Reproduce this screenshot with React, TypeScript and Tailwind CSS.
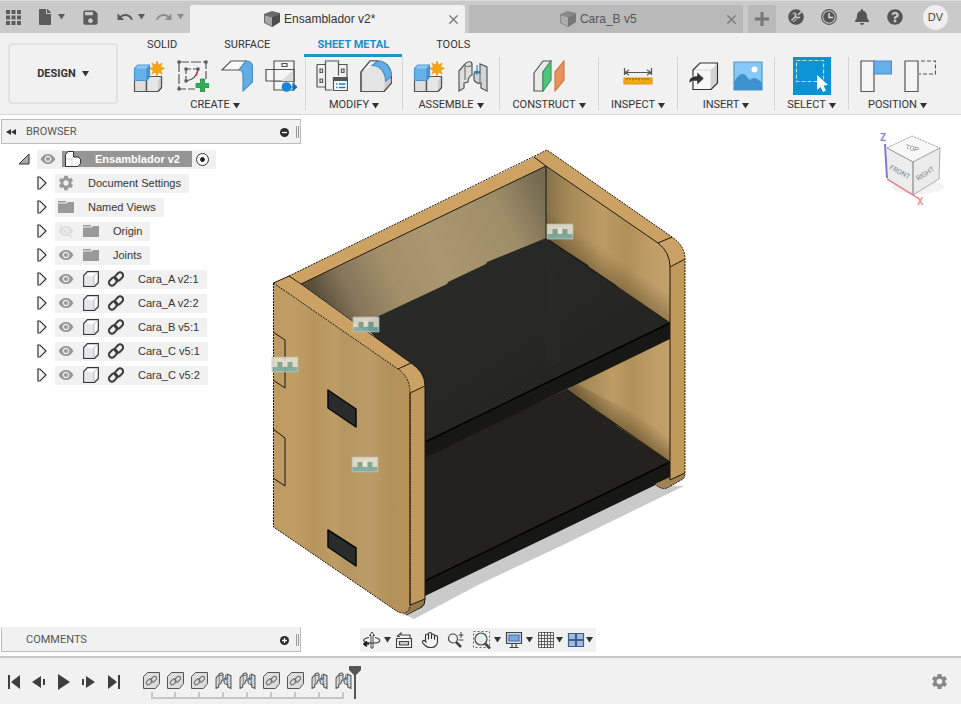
import type { ReactNode } from "react";
import { clsx } from "clsx";
import { FaBell, FaFile, FaQuestionCircle } from "react-icons/fa";
import { MdRedo, MdSave, MdSettings, MdUndo, MdVisibility, MdVisibilityOff } from "react-icons/md";
import { Hand, X } from "lucide-react";

function Caret({ className = "" }: { className?: string }) {
  return (
    <svg width="7" height="6" viewBox="0 0 7 6" className={clsx("shrink-0", className)}>
      <path d="M0 0h7L3.5 5.500z" fill="currentColor" />
    </svg>
  );
}

/* ---------- ribbon icons, all on a 32px grid ---------- */

function Icon({ children, size = 32 }: { children: ReactNode; size?: number }) {
  return (
    <svg width={size} height={size} viewBox="0 0 32 32" fill="none" stroke="#555" strokeWidth="1.2">
      {children}
    </svg>
  );
}

function NewComponentIcon() {
  return (
    <Icon>
      <path d="M1.5 20.5h12v11h-12z" fill="#dedede" />
      <path d="M13.5 20.5l3-4h12v11l-3.500 4h-11.500z" fill="#e6e6e6" />
      <path d="M25 20.500l3.500-4v11l-3.500 4z" fill="#cfcfcf" stroke="none" />
      <path d="M13.5 20.5l3-4h12v11l-3.500 4h-11.500z" />
      <path d="M1.500 8.500l3.500-3.500h11.500v12l-3 3.500h-12z" fill="#64b1ea" stroke="#4b96cf" />
      <path d="M2 8.500L5.300 5.500h10.500l-2.500 3z" fill="#8cc8f2" stroke="none" />
      <path d="M13.500 8.500l3-3.500v12l-3 3.500z" fill="#4590cb" stroke="none" />
      <path
        d="M24 1l1.500 4 3.800-2-1.800 3.800 4 1.700-4 1.700 1.800 3.800-3.800-1.800L24 16l-1.500-3.800-3.800 1.800 1.800-3.800-4-1.700 4-1.700-1.800-3.800 3.800 2z"
        fill="#f5a30f"
        stroke="#e0951a"
        strokeWidth="0.600"
      />
    </Icon>
  );
}

function SketchIcon() {
  return (
    <Icon>
      <path d="M2 2h27v17M2 2v27h16" strokeDasharray="10 2" />
      <path d="M9 9h12M9 9v12" strokeDasharray="5 2" />
      <path d="M9 21c7-1 11-5 12-12" />
      <path d="M21 9c0 3-1 5-2 7" stroke="#c33" />
      <path
        d="M.500.500h3v3h-3zM27.500.500h3v3h-3zM.500 27.500h3v3h-3zM7.500 7.500h3v3h-3zM19.500 7.500h3v3h-3zM7.500 19.500h3v3h-3z"
        fill="#555"
        stroke="none"
      />
      <path d="M23.500 19h4v4.500H32v4h-4.500V32h-4v-4.500H19v-4h4.500z" fill="#2fae54" stroke="#1f8f40" strokeWidth="0.800" />
    </Icon>
  );
}

function FlangeIcon() {
  return (
    <Icon>
      <path d="M1 10L10 1h15l-7 9z" fill="#fafafa" />
      <path d="M18 10l7-9c4 0 6.500 2 6.500 6v15L22 31V16c0-3.500-1-6-4-6z" fill="#62ade6" stroke="#4a90c8" />
    </Icon>
  );
}

function UnfoldIcon() {
  return (
    <Icon>
      <path d="M9 1h20v8.500H9zM9 21h20v9H9z" fill="#f5f5f5" />
      <path d="M1 9.500h28V21H1z" fill="#f5f5f5" />
      <path d="M28.500 10V21H16z" fill="#ddd" stroke="none" />
      <path d="M9 9.500V21M29 9.500V21M17 3.500h5v3h-5z" />
      <circle cx="21.500" cy="27" r="4.800" fill="#1686d9" stroke="none" />
      <path d="M25 27h3v-3l4 3-4 3v-3" fill="#1470b4" stroke="#1470b4" />
    </Icon>
  );
}

function RulesIcon() {
  return (
    <Icon>
      <path d="M1 4.500h8.500V1h13v3.500H31V18M1 4.500V27h8.500v3H16M9.500 4.500V27M22.500 4.500v11" />
      <path d="M4 9h2.500v3.500H4zM4 19h2.500v3.500H4zM25.500 9H28v3.500h-2.500z" />
      <path d="M17.500 17.500h14v13h-14z" fill="#fff" />
      <path d="M17.500 17.500h14v3h-14z" fill="#555" />
      <path d="M20 24h1.500M20 27.500h1.500M23 24h6.500M23 27.500h6.500" stroke="#1879c4" strokeWidth="1.500" />
    </Icon>
  );
}

function FilletIcon() {
  return (
    <Icon>
      <path d="M1 12L10 1h8c8 0 13.500 7 13.500 15v7L24 31.500H1z" fill="#e4e4e4" />
      <path d="M1 12L10 1h7l-5 4.500C9 8 5 10 1 12z" fill="#f6f6f6" stroke="none" />
      <path d="M25 20.500l6-4V23l-7 8z" fill="#cdcdcd" stroke="none" />
      <path d="M12 5.500L17.500 1C26 1 31.500 8 31.500 16.500L25.500 21C25.500 12 20 5.500 12 5.500z" fill="#62ade6" stroke="#4a90c8" />
      <path d="M1 12L10 1h8M31.500 16v7L24 31.500H1V12" />
    </Icon>
  );
}

function JointIcon({ size }: { size?: number }) {
  return (
    <Icon size={size}>
      <g strokeWidth={size ? 2 : 1.2}>
        <path d="M2 11l6-7c2-3 7-3 7 0v11c-3 1-4 4-4 7l-4 1v5l-5 3z" fill="#dedede" />
        <path d="M8 5v15M8 5c1 2 5 2 7 0" stroke="#777" />
        <path d="M30 7v24l-6-3v-5c-3 1-6-1-7-3v-6c1-3 4-3 6-1V4z" fill="#d0d5d9" />
        <path d="M23 13v10" stroke="#777" />
        <path d="M20 5v9M17.500 11l2.500 3 2.500-3" stroke="#2f83bd" />
      </g>
    </Icon>
  );
}

function PlaneIcon() {
  return (
    <Icon>
      <path d="M1 13L10 1h8l-8 11v19H1z" fill="#e9e9e9" />
      <path d="M10 12l8-11v19l-8 11z" fill="#4fc67a" stroke="#3b9c5d" />
      <path d="M22 12l9-11v19l-9 11z" fill="#e8925c" stroke="#cf7b48" />
    </Icon>
  );
}

function MeasureIcon() {
  return (
    <Icon>
      <path d="M2.500 8v7M29.500 8v7M4 12.500h24M7 10l-4 2.500L7 15M25 10l4 2.500-4 2.500" />
      <path d="M2 18h28v6H2z" fill="#f5a90f" stroke="#e09514" />
      <path d="M5 18v2.500M8 18v2M11 18v2.500M14 18v2M17 18v2.500M20 18v2M23 18v2.500M26 18v2" stroke="#8a5a00" strokeWidth="1" />
    </Icon>
  );
}

function InsertIcon() {
  return (
    <Icon>
      <path d="M5 10l7-7h17.500v20L23 29.500H5z" fill="#f7f7f7" stroke="none" />
      <path d="M23 10l6.500-7v20L23 29.500z" fill="#d2d2d2" stroke="none" />
      <path d="M5 10h18v19" stroke="#d5d5d5" />
      <path d="M5 10l7-7h17.500v20L23 29.500H5z" stroke="#333" />
      <path d="M1 23c0-5 3-7 8-7v-4l7 6.500L9 25v-4c-3 0-5 0-8 2z" fill="#333" stroke="#fff" strokeWidth="0.500" />
    </Icon>
  );
}

function ImageIcon() {
  return (
    <Icon>
      <path d="M2 2h28v28H2z" fill="#86c8f6" stroke="#4b9bd2" />
      <path d="M2 22c3-5 5-8 9-8 3 0 5 5 7 6 3-3 7-3 12 3v7H2z" fill="#3f92cc" stroke="none" />
      <circle cx="22.500" cy="9.500" r="3" fill="#fff" stroke="none" />
    </Icon>
  );
}

function SelectIcon() {
  return (
    <svg width="38" height="38" viewBox="0 0 38 38" fill="none">
      <path d="M3.500 3.500h27v21h-27z" stroke="#b4e8c4" strokeWidth="1.200" strokeDasharray="4 2" />
      <path d="M24 18v15l3.500-3 2.500 5 3-1.500-2.500-5 4.500-.500z" fill="#fff" />
    </svg>
  );
}

function CapturePositionIcon() {
  return (
    <Icon>
      <path d="M1 1h13v30.500H1z" fill="#f5f5f5" />
      <path d="M14 1h17.500v13H14z" fill="#64aeea" stroke="#4a90c8" />
    </Icon>
  );
}

function RevertPositionIcon() {
  return (
    <Icon>
      <path d="M1 1h13v30.500H1z" fill="#f5f5f5" />
      <path d="M17 1h14.500v13H15" strokeDasharray="4 2" />
    </Icon>
  );
}

const groups = [
  {
    name: "CREATE",
    width: "w-[181px]",
    tools: [
      ["New component", <NewComponentIcon />],
      ["Create sketch", <SketchIcon />],
      ["Flange", <FlangeIcon />],
      ["Unfold", <UnfoldIcon />],
    ],
  },
  {
    name: "MODIFY",
    width: "w-[97px]",
    tools: [
      ["Sheet metal rules", <RulesIcon />],
      ["Fillet", <FilletIcon />],
    ],
  },
  {
    name: "ASSEMBLE",
    width: "w-[97px]",
    tools: [
      ["New component", <NewComponentIcon />],
      ["Joint", <JointIcon />],
    ],
  },
  { name: "CONSTRUCT", width: "w-[99px]", tools: [["Offset plane", <PlaneIcon />]] },
  { name: "INSPECT", width: "w-[79px]", tools: [["Measure", <MeasureIcon />]] },
  {
    name: "INSERT",
    width: "w-[97px]",
    tools: [
      ["Insert derive", <InsertIcon />],
      ["Canvas", <ImageIcon />],
    ],
  },
  { name: "SELECT", width: "w-[74px]", tools: [["Select", <SelectIcon />]] },
  {
    name: "POSITION",
    width: "w-[97px]",
    tools: [
      ["Capture position", <CapturePositionIcon />],
      ["Revert position", <RevertPositionIcon />],
    ],
  },
] as { name: string; width: string; tools: [string, ReactNode][] }[];

/* ---------- title bar ---------- */

function DocCube() {
  return (
    <svg width="16" height="16" viewBox="0 0 16 16" className="shrink-0">
      <path d="M0 3l8-3 8 2v9l-8 5-8-4z" fill="#6a6a6a" />
      <path d="M1 4.500l7 2V15l-7-3.500z" fill="#a5a5a5" />
      <path d="M8 6.500l8-3.500v8l-8 5z" fill="#4d4d4d" />
    </svg>
  );
}

function DocTab({ title, active }: { title: string; active?: boolean }) {
  return (
    <div
      className={clsx(
        "flex min-w-0 flex-1 items-center rounded-t-[3px] pr-1",
        active ? "bg-[#f1f1f1] text-[#333]" : "bg-[#b9b9b9] text-[#555]",
      )}
    >
      <button type="button" className="flex min-w-0 flex-1 items-center justify-center gap-1 pl-1 text-[12px]">
        <span className={active ? "" : "opacity-60"}>
          <DocCube />
        </span>
        <span className="truncate">{title}</span>
      </button>
      <button type="button" aria-label={`Close ${title}`} className="text-[#777]">
        <X size={15} strokeWidth={2} />
      </button>
    </div>
  );
}

function TitleBar() {
  return (
    <header className="flex h-[33px] border-t border-[#dcdcdc] bg-[#cacaca] font-['Liberation_Sans',sans-serif]">
      <div className="flex w-[190px] shrink-0 items-center pl-1.5 text-[#5c5c5c]">
        <button type="button" aria-label="Data panel">
          <svg width="15" height="15" viewBox="0 0 15 15" fill="currentColor">
            <path d="M0 0h4v4H0zM5.500 0h4v4h-4zM11 0h4v4h-4zM0 5.500h4v4H0zM5.500 5.500h4v4h-4zM11 5.500h4v4h-4zM0 11h4v4H0zM5.500 11h4v4h-4zM11 11h4v4h-4z" />
          </svg>
        </button>
        <button type="button" aria-label="File" className="ml-4 flex items-center gap-[5px]">
          <FaFile size={16} />
          <Caret />
        </button>
        <button type="button" aria-label="Save" className="ml-4">
          <MdSave size={19} />
        </button>
        <button type="button" aria-label="Undo" className="ml-4 flex items-center gap-1">
          <MdUndo size={18} />
          <Caret />
        </button>
        <button type="button" aria-label="Redo" className="ml-2.5 flex items-center gap-1 text-[#8d8d8d]">
          <MdRedo size={18} />
          <Caret />
        </button>
      </div>
      <div className="flex min-w-0 flex-1 gap-1 pt-1 pr-[5px]">
        <DocTab title="Ensamblador v2*" active />
        <DocTab title="Cara_B v5" />
      </div>
      <div className="flex w-[213px] shrink-0 items-center text-[#555]">
        <button type="button" aria-label="New design" className="mt-1 flex h-7 w-7 items-center justify-center rounded-t-[3px] bg-[#b9b9b9] text-[#777]">
          <svg width="14" height="14" viewBox="0 0 14 14">
            <path d="M7 0v14M0 7h14" stroke="currentColor" strokeWidth="3" />
          </svg>
        </button>
        <div className="ml-3 flex items-center gap-[17px]">
          <button type="button" aria-label="Extensions">
            <svg width="16" height="16" viewBox="0 0 16 16" fill="none" stroke="currentColor">
              <circle cx="8" cy="8" r="7.800" fill="currentColor" stroke="none" />
              <path d="M3.500 11.500l4-4M7.500 4v4.500H12M10 6l5-5" stroke="#cacaca" strokeWidth="1.600" />
              <path d="M4 5.500A5 5 0 0 1 7 3.500M5 13l4-3" stroke="#cacaca" />
            </svg>
          </button>
          <button type="button" aria-label="Job status">
            <svg width="16" height="16" viewBox="0 0 16 16" fill="none" stroke="currentColor">
              <circle cx="8" cy="8" r="7.300" strokeWidth="1.200" />
              <circle cx="8" cy="8" r="5.700" fill="currentColor" stroke="none" />
              <path d="M8 4v4.500h4" stroke="#e0e0e0" strokeWidth="1.400" />
            </svg>
          </button>
          <button type="button" aria-label="Notifications">
            <FaBell size={16} />
          </button>
          <button type="button" aria-label="Help">
            <FaQuestionCircle size={16} />
          </button>
        </div>
        <button type="button" className="ml-5 h-[25px] w-[25px] rounded-full bg-[#f0eeee] text-[11px] text-[#444]">
          DV
        </button>
      </div>
    </header>
  );
}

/* ---------- ribbon ---------- */

function Ribbon() {
  return (
    <div className="flex border-b border-[#dadada] bg-[#f1f1f1] text-[11px] text-[#333]">
      <button
        type="button"
        className="my-2.5 ml-2 flex w-[110px] shrink-0 items-center justify-center gap-1.5 rounded-[4px] border-2 border-[#e2e2e2] pt-px font-bold"
      >
        DESIGN
        <Caret />
      </button>
      <div className="ml-[7px] flex flex-col">
        <nav className="flex gap-[21px] pl-[9px]">
          {["SOLID", "SURFACE", "SHEET METAL", "TOOLS"].map((tab) => (
            <button
              type="button"
              key={tab}
              className={clsx(
                "h-6 border-b-3 px-[13px] pt-0.5 leading-4",
                tab === "SHEET METAL" ? "border-[#1496d2] font-bold text-[#1a8fc9]" : "border-transparent",
              )}
            >
              {tab}
            </button>
          ))}
        </nav>
        <div className="flex">
          {groups.map((group) => (
            <section
              key={group.name}
              className={clsx("mb-1 flex shrink-0 flex-col items-center", group.width, group.name !== "POSITION" && "border-r border-[#d5d5d5]")}
            >
              <div className="flex h-[38px] items-center gap-3">
                {group.tools.map(([label, icon]) => (
                  <button type="button" key={label} aria-label={label} className={clsx(group.name === "SELECT" && "bg-[#0c93d6]")}>
                    {icon}
                  </button>
                ))}
              </div>
              <button type="button" className="flex h-[15px] items-center gap-[3px] pt-1.5">
                {group.name}
                <Caret />
              </button>
            </section>
          ))}
        </div>
      </div>
    </div>
  );
}

/* ---------- browser tree ---------- */

function Folder() {
  return (
    <svg width="16" height="16" viewBox="0 0 16 16" fill="#999">
      <path d="M0 2h8v1.500H0zM0 4.500h8.500L10 3h6v11H0z" />
    </svg>
  );
}

function Box() {
  return (
    <svg width="16" height="16" viewBox="0 0 16 16" fill="none">
      <path d="M.700 4.500L4.500.700h10.800v11l-3.800 3.600H.700z" fill="#fff" stroke="#333" strokeWidth="1.200" />
      <path d="M1.500 5h9.500v9.500H1.500z" fill="#e4e6ea" />
      <path d="M11 5v10M11 5l4-4" stroke="#bbb" />
    </svg>
  );
}

function Chain() {
  return (
    <svg width="16" height="16" viewBox="0 0 16 16" fill="none" stroke="#3c3c3c" strokeWidth="2">
      <rect x="0.500" y="7.500" width="9" height="6" rx="3" transform="rotate(-45 5 10.500)" />
      <rect x="6.500" y="2.500" width="9" height="6" rx="3" transform="rotate(-45 11 5.500)" />
    </svg>
  );
}

function Eye() {
  return <MdVisibility size={16} className="text-[#999]" />;
}

const icons: Record<string, ReactNode> = {
  gear: <MdSettings size={18} className="-m-px text-[#999]" />,
  folder: <Folder />,
  eye: <Eye />,
  hidden: <MdVisibilityOff size={16} className="text-[#dcdcdc]" />,
  box: <Box />,
  link: <Chain />,
};

const nodes = [
  { label: "Document Settings", icons: ["gear"] },
  { label: "Named Views", icons: ["folder"] },
  { label: "Origin", icons: ["hidden", "folder"] },
  { label: "Joints", icons: ["eye", "folder"] },
  { label: "Cara_A v2:1", icons: ["eye", "box", "link"] },
  { label: "Cara_A v2:2", icons: ["eye", "box", "link"] },
  { label: "Cara_B v5:1", icons: ["eye", "box", "link"] },
  { label: "Cara_C v5:1", icons: ["eye", "box", "link"] },
  { label: "Cara_C v5:2", icons: ["eye", "box", "link"] },
];

function PanelHeader({ title, open }: { title: string; open?: boolean }) {
  return (
    <div
      className={clsx(
        "ml-px flex h-[25px] w-[300px] items-center border border-[#bcbcbc] bg-[#f1f1f1] pt-px pr-px text-[11px] text-[#555]",
        !open && "border-t-transparent",
      )}
    >
      <span className="w-6 pl-1">
        {open && (
          <svg width="10" height="6" viewBox="0 0 10 6" fill="#333">
            <path d="M5 0v6L0 3zM10 0v6L5 3z" />
          </svg>
        )}
      </span>
      <h2 className="flex-1">{title}</h2>
      <button type="button" aria-label={open ? "Collapse" : "Expand"}>
        <svg width="9" height="9" viewBox="0 0 9 9">
          <circle cx="4.500" cy="4.500" r="4.500" fill="#2b2b2b" />
          <path d={open ? "M2 4.500h5" : "M2 4.500h5M4.500 2v5"} stroke="#fff" strokeWidth="1.300" />
        </svg>
      </button>
      <span className="ml-[7px] h-3 w-[3px] border-x border-[#999]" />
    </div>
  );
}

function Browser() {
  return (
    <aside className="pt-1">
      <PanelHeader title="BROWSER" open />
      <ul className="pt-[3px] font-['Liberation_Sans',sans-serif] text-[11px] text-[#333]">
        <li className="flex h-6 items-center pl-[18px]">
          <svg width="12" height="12" viewBox="0 0 12 12" className="mr-[7px]">
            <path d="M11 1v10H1z" fill="#aaa" stroke="#333" />
          </svg>
          <div className="flex h-[19px] items-center bg-[#f1f1f1] pr-[7px] pl-[3px]">
            <Eye />
            <button type="button" className="mr-1 ml-1.5 flex h-4 w-[130px] items-center gap-3.5 bg-[#959595] pl-[3px] font-bold text-white">
              <svg width="16" height="16" viewBox="0 0 16 16" fill="#fff" stroke="#333">
                <path d="M.500 3.500L3 .500h5.500V6h4.500l2.500 2v4.500l-2.500 3H.500z" />
                <path d="M7 15V8l1.500-2M1 8h6" stroke="#ccc" />
              </svg>
              Ensamblador v2
            </button>
            <input
              type="radio"
              defaultChecked
              aria-label="Activate Ensamblador v2"
              className="h-[13px] w-[13px] appearance-none rounded-full border border-[#333] bg-white bg-radial from-[#222] from-25% to-white to-35%"
            />
          </div>
        </li>
        {nodes.map((node) => (
          <li key={node.label} className="flex h-6 items-center pl-[37px]">
            <button type="button" aria-label={`Expand ${node.label}`} className="w-[18px]">
              <svg width="10" height="14" viewBox="0 0 10 14">
                <path d="M1 1h2l6 6-6 6H1z" fill="#f4f4f4" stroke="#333" strokeWidth="1.200" />
              </svg>
            </button>
            <div className="flex h-[19px] items-center gap-[9px] bg-[#f1f1f1] pr-2 pl-[3px]">
              {node.icons.map((name) => (
                <span key={name} className="flex w-4 justify-center">
                  {icons[name]}
                </span>
              ))}
              <span className="pl-[5px]">{node.label}</span>
            </div>
          </li>
        ))}
      </ul>
    </aside>
  );
}

/* ---------- viewport ---------- */

function JointBadge({ x, y }: { x: number; y: number }) {
  return (
    <g transform={`translate(${x} ${y})`} opacity="0.850">
      <path d="M0 0h26v15H0z" fill="#e6e4d6" stroke="#b4bcae" strokeWidth="0.800" />
      <path d="M.500 10h25v4.500H.500z" fill="#79b3ae" />
      <path d="M5.500 5h5v6h-5zM15.500 5h5v6h-5z" fill="#83a79c" />
      <path d="M11 4h4v5h-4z" fill="#f4f2e6" />
    </g>
  );
}

function Model() {
  return (
    <svg width="425" height="480" viewBox="268 145 425 480" role="img" aria-label="Shelf assembly" strokeLinejoin="round">
      <defs>
        <linearGradient id="side">
          <stop offset="0" stopColor="#bd9b62" />
          <stop offset="0.150" stopColor="#c09d65" />
          <stop offset="0.300" stopColor="#b7955d" />
          <stop offset="0.450" stopColor="#be9d66" />
          <stop offset="0.520" stopColor="#b59560" />
          <stop offset="0.700" stopColor="#bd9d67" />
          <stop offset="0.850" stopColor="#b3915b" />
          <stop offset="1" stopColor="#b8935a" />
        </linearGradient>
        <linearGradient id="back" gradientUnits="userSpaceOnUse" x1="320" y1="300" x2="546" y2="190">
          <stop offset="0" stopColor="#5a503a" />
          <stop offset="0.120" stopColor="#85765a" />
          <stop offset="0.300" stopColor="#a39069" />
          <stop offset="0.500" stopColor="#aa976f" />
          <stop offset="0.800" stopColor="#9f8d68" />
          <stop offset="1" stopColor="#746a50" />
        </linearGradient>
        <linearGradient id="inner">
          <stop offset="0" stopColor="#84704a" />
          <stop offset="0.180" stopColor="#a58955" />
          <stop offset="0.450" stopColor="#bd9b64" />
          <stop offset="0.650" stopColor="#b2905a" />
          <stop offset="0.850" stopColor="#be9d67" />
          <stop offset="1" stopColor="#c3a16a" />
        </linearGradient>
        <linearGradient id="shade" gradientUnits="userSpaceOnUse" x1="608" y1="281" x2="622" y2="261">
          <stop offset="0" stopColor="#3c2f18" stopOpacity="0.350" />
          <stop offset="1" stopColor="#3c2f18" stopOpacity="0" />
        </linearGradient>
        <linearGradient id="shade2" gradientUnits="userSpaceOnUse" x1="618" y1="426" x2="630" y2="409">
          <stop offset="0" stopColor="#3c2f18" stopOpacity="0.450" />
          <stop offset="1" stopColor="#3c2f18" stopOpacity="0" />
        </linearGradient>
        <linearGradient id="top" x1="0" y1="0" x2="1" y2="1">
          <stop offset="0" stopColor="#2b2b2a" />
          <stop offset="1" stopColor="#22221f" />
        </linearGradient>
      </defs>

      <path d="M420 597L655 485l29 1-121 59-83 39-66 35-10-5z" fill="#cacaca" />

      {/* back and right inner faces */}
      <path d="M301 284L546 166v74L366 330z" fill="url(#back)" />
      <path d="M546 166l112 77q12 9 12 24v58L546 240z" fill="url(#inner)" />
      <path d="M546 240v-30l112 74 12 6v35z" fill="url(#shade)" />
      <path d="M565 390l105-54v128z" fill="url(#inner)" />
      <path d="M565 391l12-7 93 48v31z" fill="url(#shade2)" />

      {/* shelves */}
      <path d="M425 456l142-67 22 16 1 2 26 17 1 2 53 36-245 119z" fill="#23221f" />
      <path d="M425 581l245-119v16L425 596z" fill="#171716" />
      <path d="M425 581l245-119" stroke="#000" strokeWidth="1.500" />
      <path d="M546 238l42 27 1 2 27 18 1 2 53 36-245 119v-55L366 328l2-7 30-14 2-1 47-22 1-2 38-18 1-2z" fill="url(#top)" />
      <path d="M546 258v110l14-6v-78z" fill="#30302e" opacity="0.300" />
      <path d="M425 442l245-119v16L425 458z" fill="#171716" />
      <path d="M425 442l245-119" stroke="#000" strokeWidth="1.500" />

      {/* top rims */}
      <path d="M289 276L534 157l12 9-245 118z" fill="#cda263" />
      <path d="M534 157l13-7 125 87q13 9 13 22l-15 8q0-15-12-24L546 166z" fill="#cba263" />
      <path d="M670 267l15-8v214l-15 7z" fill="#c09a5c" />
      <path d="M655 484l15-7v3l15-7q0 4-2 6l-16 9q-6 2-12-4z" fill="#a18252" />
      <path d="M273 283l16-7 122 87q14 9 14 23l-15 7q0-16-12-24z" fill="#cba263" />

      {/* left panel */}
      <path d="M410 393l15-7v213l-15 6z" fill="#c09a5c" />
      <path d="M410 605l15-6q0 6-3 8l-19 8z" fill="#94774a" />
      <path d="M273.500 283l124.500 86q12 8 12 24v212q-1 11-12 7L273.500 527z" fill="url(#side)" />

      <g fill="none" stroke="#1c160c">
        <path d="M289 276L547 150l125 87q13 9 13 22v214q0 4-2 6l-16 9q-6 2-12-4" strokeDasharray="2 1" />
        <path d="M534 157l12 9M301 284l245-118 112 77q12 9 12 24v213M546 166v72M658 243l14-6M670 267l15-8M670 480l15-7" />
        <path d="M273.500 283l15.500-7 12 8 110 79q14 9 14 23v213q0 6-3 8l-16 8" />
        <path d="M273.500 283l124.500 86q12 8 12 24v212q-1 11-12 7L273.500 527z" strokeDasharray="2 1" />
        <path d="M398 369l13-6M410 393l15-7M410 605l15-6M410 393v212" />
        <path d="M273 332l12 8v48l-12-8M273 429l12 9v48l-12-8" />
        <path d="M546 238l124 85M567 390l103 72" />
      </g>
      <g fill="#2a2b2b" stroke="#080808" strokeWidth="1.500">
        <path d="M328 390l28 19v18l-28-19zM328 530l28 18v18l-28-19z" />
      </g>

      <JointBadge x={353} y={317} />
      <JointBadge x={272} y={357} />
      <JointBadge x={547} y={224} />
      <JointBadge x={352} y={457} />
    </svg>
  );
}

function ViewCube() {
  return (
    <svg width="75" height="82" viewBox="875 128 75 82" role="img" aria-label="View cube" fontSize="7">
      <ellipse cx="918" cy="187" rx="26" ry="7" fill="#f3f3f3" />
      <path d="M887 148l25-12 28 12-27 14z" fill="#f8f8f8" stroke="#888" strokeWidth="0.800" strokeDasharray="2 1" />
      <path d="M887 148l26 14v33l-25-16z" fill="#ededed" />
      <path d="M913 162l27-14-1 31-26 16z" fill="#ebebeb" stroke="#999" strokeWidth="0.800" />
      <path d="M887 148l26 14v33" fill="none" stroke="#888" strokeWidth="0.800" />
      <path d="M885 144l2 34" stroke="#7c78d8" strokeWidth="2" />
      <path d="M887 179l26 16 6 4" fill="none" stroke="#e08c8c" strokeWidth="1.500" />
      <g fill="#858585">
        <text x="905" y="149" transform="rotate(15 905 149)">TOP</text>
        <text x="889" y="169" transform="rotate(28 889 169)">FRONT</text>
        <text x="918" y="181" transform="rotate(-32 918 181)">RIGHT</text>
      </g>
      <text x="880" y="141" fontSize="10" fontWeight="bold" fill="#8d89dc">Z</text>
      <text x="917" y="205" fontSize="10" fontWeight="bold" fill="#ee9292">X</text>
    </svg>
  );
}

function NavIcon({ children }: { children: ReactNode }) {
  return (
    <svg width="18" height="18" viewBox="0 0 18 18" fill="none" stroke="#444" strokeWidth="1.200" className="shrink-0">
      {children}
    </svg>
  );
}

function NavBar() {
  return (
    <div className="ml-[59px] flex h-6 items-center bg-[#f1f1f1] pl-[3px] text-[#333]">
      <button type="button" aria-label="Orbit" className="flex w-8 items-center gap-[3px]">
        <NavIcon>
          <path d="M8 17V4.500H6.500L9 1l2.500 3.500H10V17z" fill="#fff" strokeWidth="1" />
          <path d="M6 6.500C2.500 7 .800 8 .800 9.500c0 2 5 3 10 2.500 4 0 6-1 6-2.500S14 7 12 6.500" />
          <path d="M1 13h5M4 10.500L1 13l3 2.500" stroke="#111" strokeWidth="1.500" />
        </NavIcon>
        <Caret />
      </button>
      <button type="button" aria-label="Look at" className="flex w-[26px]">
        <NavIcon>
          <path d="M1.500 7.500h15v9h-15z" fill="#f7f7f7" />
          <path d="M4.500 10.500h9v3.500h-9z" fill="#ccc" />
          <path d="M2 5.500L6 2v2h9v3.500M2 5.500h3" />
        </NavIcon>
      </button>
      <button type="button" aria-label="Pan" className="flex w-[26px]">
        <Hand size={18} strokeWidth={1.500} />
      </button>
      <button type="button" aria-label="Zoom" className="flex w-[26px]">
        <NavIcon>
          <circle cx="6" cy="7.500" r="4.500" fill="#edf4f4" />
          <path d="M9 11l5 5" strokeWidth="2.500" />
          <path d="M14 1v6M11.500 4h5M11.500 9h5" strokeWidth="1" />
        </NavIcon>
      </button>
      <button type="button" aria-label="Zoom window" className="flex w-8 items-center gap-[3px]">
        <NavIcon>
          <path d="M.500.500h16v16H.500z" strokeDasharray="2 2" strokeWidth="0.800" />
          <circle cx="8" cy="8" r="6" fill="#e3f0ea" />
          <path d="M12 12.500l5 5" strokeWidth="2.500" />
        </NavIcon>
        <Caret />
      </button>
      <button type="button" aria-label="Display settings" className="flex w-8 items-center gap-[3px]">
        <NavIcon>
          <path d="M1.500 1.500h15v11h-15z" fill="#ccd9ee" />
          <path d="M4 4h10v6H4z" fill="#7ca5dd" stroke="#4971aa" />
          <path d="M7 13v3M11 13v3M4.500 16.500h9" />
        </NavIcon>
        <Caret />
      </button>
      <button type="button" aria-label="Grid and snaps" className="flex w-[30px] items-center gap-px">
        <NavIcon>
          <path d="M1.500 1.500h15v15h-15zM4.500 1v16M7.500 1v16M10.500 1v16M13.500 1v16M1 4.500h16M1 7.500h16M1 10.500h16M1 13.500h16" strokeWidth="0.800" />
        </NavIcon>
        <Caret />
      </button>
      <button type="button" aria-label="Viewports" className="flex w-[29px] items-center gap-px">
        <NavIcon>
          <path d="M1.500 2.500h7v6h-7zM9.500 2.500h7v6h-7zM1.500 9.500h7v6h-7zM9.500 9.500h7v6h-7z" fill="#9dbfe8" stroke="#435e88" />
        </NavIcon>
        <Caret />
      </button>
    </div>
  );
}

/* ---------- timeline ---------- */

const controls = [
  ["Go to start", "M2 1h2v14H2zM14 1v14L5 8z"],
  ["Step back", "M10 2v12L1 8zM12 5h2v6h-2z"],
  ["Play", "M2 0v16l12-8z"],
  ["Step forward", "M5 2v12l9-6zM1 5h2v6H1z"],
  ["Go to end", "M12 1h2v14h-2zM2 1v14l9-7z"],
];

const features = ["insert", "insert", "insert", "joint", "joint", "insert", "insert", "joint", "joint"];

function InsertedPart() {
  return (
    <svg width="17" height="17" viewBox="0 0 17 17" fill="none" stroke="#555">
      <path d="M.500 4.500l4-4h12v11l-4 5H.500z" fill="#dcdcdc" />
      <g stroke="#666">
        <rect x="3" y="8" width="6.500" height="4" rx="2" transform="rotate(-45 6 10)" />
        <rect x="7.500" y="5" width="6.500" height="4" rx="2" transform="rotate(-45 11 7)" />
      </g>
    </svg>
  );
}

function tickPath(i: number) {
  if (i === 0) return "M24 6H13V0";
  if (i === features.length - 1) return "M0 6h12V0";
  return "M0 6h24M12 6V0";
}

function Timeline() {
  return (
    <footer className="flex h-12 items-start border-t-2 border-[#c8c8c8] bg-[#f1f1f1]">
      <div className="flex gap-[9px] pt-4 pl-1.5 text-[#3f3f3f]">
        {controls.map(([label, d]) => (
          <button type="button" key={label} aria-label={label}>
            <svg width="16" height="16" viewBox="0 0 16 16" fill="currentColor">
              <path d={d} />
            </svg>
          </button>
        ))}
      </div>
      <ol className="flex pt-3.5 pl-[17px]">
        {features.map((kind, i) => (
          <li key={i} className="flex w-6 flex-col items-center gap-[3px]">
            <button type="button" aria-label={`${kind} ${i + 1}`} className="flex h-[17px]">
              {kind === "insert" ? <InsertedPart /> : <JointIcon size={17} />}
            </button>
            <svg width="24" height="8" viewBox="0 0 24 8">
              <path d={tickPath(i)} fill="none" stroke="#c6c6c6" strokeWidth="2" />
            </svg>
          </li>
        ))}
      </ol>
      <svg width="12" height="33" viewBox="0 0 12 33" className="mt-2 -ml-1.5">
        <path d="M0 0h12v4L7 9v24H5V9L0 4z" fill="#555" />
      </svg>
      <button type="button" aria-label="Timeline settings" className="mt-3.5 mr-3 ml-auto text-[#888]">
        <MdSettings size={19} />
      </button>
    </footer>
  );
}

export default function App() {
  return (
    <div className="flex min-h-screen flex-col bg-white font-[Roboto,sans-serif]">
      <TitleBar />
      <Ribbon />
      {/* model and panels share one grid cell, so the panels float over the canvas */}
      <main className="grid flex-1">
        <div className="col-start-1 row-start-1 flex items-start justify-center pt-[30px]">
          <Model />
        </div>
        <div className="col-start-1 row-start-1 flex flex-col justify-between pb-1">
          <div className="flex items-start justify-between pr-[11px]">
            <Browser />
            <div className="pt-[13px]">
              <ViewCube />
            </div>
          </div>
          <div className="flex items-center">
            <PanelHeader title="COMMENTS" />
            <NavBar />
          </div>
        </div>
      </main>
      <Timeline />
    </div>
  );
}
